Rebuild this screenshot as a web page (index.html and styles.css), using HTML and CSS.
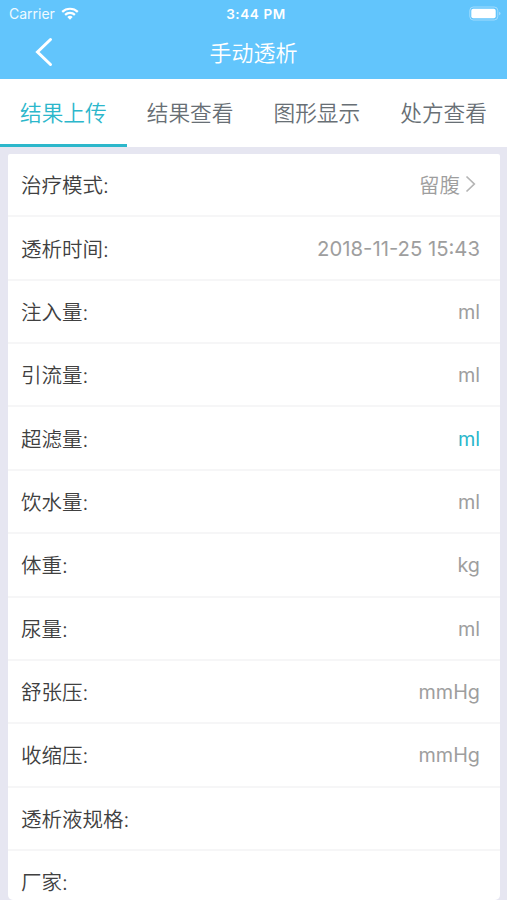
FILE: index.html
```html
<!doctype html>
<html lang="zh-CN">
  <head>
    <meta charset="UTF-8" />
    <meta name="viewport" content="width=device-width, initial-scale=1.0" />
    <title>手动透析</title>
    <link rel="stylesheet" href="styles.css">
  </head>
  <body>
    <header class="header">
      <div class="status_bar">
        <div class="status_left">
          <span class="carrier">Carrier</span>
          <svg class="wifi" width="18" height="13" viewBox="0 0 18 13" fill="none" stroke="#fff" stroke-width="2.2">
            <path d="M1.2 4.9a11.2 11.2 0 0 1 15.6 0" />
            <path d="M4.1 7.9a7 7 0 0 1 9.8 0" />
            <path d="M6.3 10.1a3.9 3.9 0 0 1 5.4 0L9 12.8z" fill="#fff" stroke="none" />
          </svg>
        </div>
        <span class="clock">3:44 PM</span>
        <div class="status_right">
          <svg width="32" height="15" viewBox="0 0 32 15">
            <rect x="0.8" y="1" width="28" height="13" rx="3.6" fill="none" stroke="#fff" stroke-opacity="0.4" />
            <rect x="2.3" y="2.8" width="24.4" height="9.4" rx="2" fill="#fff" />
            <path d="M30.2 5.8v3.4q1.3-.5 1.3-1.7t-1.3-1.7z" fill="#fff" fill-opacity="0.5" />
          </svg>
        </div>
      </div>
      <div class="nav_bar">
        <svg class="back" width="18" height="30" viewBox="0 0 18 30" fill="none" stroke="#fff" stroke-width="3" stroke-linecap="round">
          <path d="M15.5 2.5L2.5 15L15.5 27.5" />
        </svg>
        <h1>手动透析</h1>
      </div>
    </header>

    <nav class="tabs">
      <a class="tab active">结果上传</a>
      <a class="tab">结果查看</a>
      <a class="tab">图形显示</a>
      <a class="tab">处方查看</a>
    </nav>

    <main class="content">
      <ul class="form_list">
        <li class="row">
          <span class="label">治疗模式:</span>
          <span class="value value_select">留腹
            <svg width="11" height="18" viewBox="0 0 11 18" fill="none" stroke="#b4b4b4" stroke-width="1.7">
              <path d="M1.5 1.5L9.3 9L1.5 16.5" />
            </svg>
          </span>
        </li>
        <li class="row"><span class="label">透析时间:</span><span class="value value_time">2018-11-25 15:43</span></li>
        <li class="row"><span class="label">注入量:</span><span class="value">ml</span></li>
        <li class="row"><span class="label">引流量:</span><span class="value">ml</span></li>
        <li class="row"><span class="label">超滤量:</span><span class="value highlight">ml</span></li>
        <li class="row"><span class="label">饮水量:</span><span class="value">ml</span></li>
        <li class="row"><span class="label">体重:</span><span class="value">kg</span></li>
        <li class="row"><span class="label">尿量:</span><span class="value">ml</span></li>
        <li class="row"><span class="label">舒张压:</span><span class="value">mmHg</span></li>
        <li class="row"><span class="label">收缩压:</span><span class="value">mmHg</span></li>
        <li class="row"><span class="label">透析液规格:</span></li>
        <li class="row"><span class="label">厂家:</span></li>
      </ul>
    </main>
  </body>
</html>
```
FILE: styles.css
```css
:root {
  --color-header: #62c5fc;
  --color-accent: #2cb7cb;
  --color-page: #e6e6f1;
  --color-text: #404040;
  --color-muted: #9e9e9e;
  --font-weight-cjk: 350;
}

* {
  box-sizing: border-box;
}
body {
  margin: 0;
  height: 100vh;
  overflow: hidden;
  display: flex;
  flex-direction: column;
  background-color: var(--color-page);
  font-family: Inter, "Noto Sans CJK SC", sans-serif;
  color: var(--color-text);
}

/* Header */
.header {
  height: 79px;
  flex-shrink: 0;
  background-color: var(--color-header);
  color: #fff;
}
.status_bar {
  display: grid;
  grid-template-columns: 1fr auto 1fr;
  align-items: center;
  height: 27px;
  padding: 0 6px 0 9px;
  font-size: 13.5px;
}
.status_left {
  display: flex;
  align-items: center;
  gap: 6px;
}
.carrier {
  font-size: 14px;
  color: #f0faff;
}
.clock {
  font-weight: 600;
  letter-spacing: 0.6px;
  margin-left: 2px;
}
.status_right {
  display: flex;
  justify-content: flex-end;
}
.nav_bar {
  display: grid;
  grid-template-columns: 1fr auto 1fr;
  align-items: center;
  height: 50px;
}
.back {
  margin-left: 35px;
}
h1 {
  margin: 0;
  padding-bottom: 3px;
  font-size: 22px;
  font-weight: var(--font-weight-cjk);
}

/* Tabs */
.tabs {
  display: grid;
  grid-template-columns: repeat(4, 1fr);
  height: 68px;
  flex-shrink: 0;
  background-color: #fff;
}
.tab {
  display: flex;
  align-items: center;
  justify-content: center;
  border-bottom: 3px solid transparent;
  font-size: 21.7px;
  font-weight: var(--font-weight-cjk);
  color: #686f75;
}
.tab.active {
  color: var(--color-accent);
  border-bottom-color: var(--color-accent);
}

/* List */
.content {
  flex: 1;
  min-height: 0;
  padding: 7px 7px 0 8px;
}
.form_list {
  height: 100%;
  margin: 0;
  padding: 0;
  overflow: hidden;
  list-style: none;
  background-color: #fff;
  border-radius: 2px 2px 5px 5px;
}
.row {
  display: flex;
  align-items: center;
  justify-content: space-between;
  height: 63.36px;
  padding: 0 20px 0 13px;
  border-bottom: 2px solid #f6f6f7;
  font-size: 20.5px;
}
.label {
  padding-bottom: 1px;
  font-weight: var(--font-weight-cjk);
}
.value {
  color: var(--color-muted);
  font-size: 19.8px;
  padding-top: 1px;
}
.value_select {
  display: flex;
  align-items: center;
  gap: 5px;
  padding: 0 4px 1px 0;
  font-size: 20.5px;
  font-weight: var(--font-weight-cjk);
}
.value_time {
  font-size: 20.3px;
}
.value.highlight {
  color: var(--color-accent);
}
```
